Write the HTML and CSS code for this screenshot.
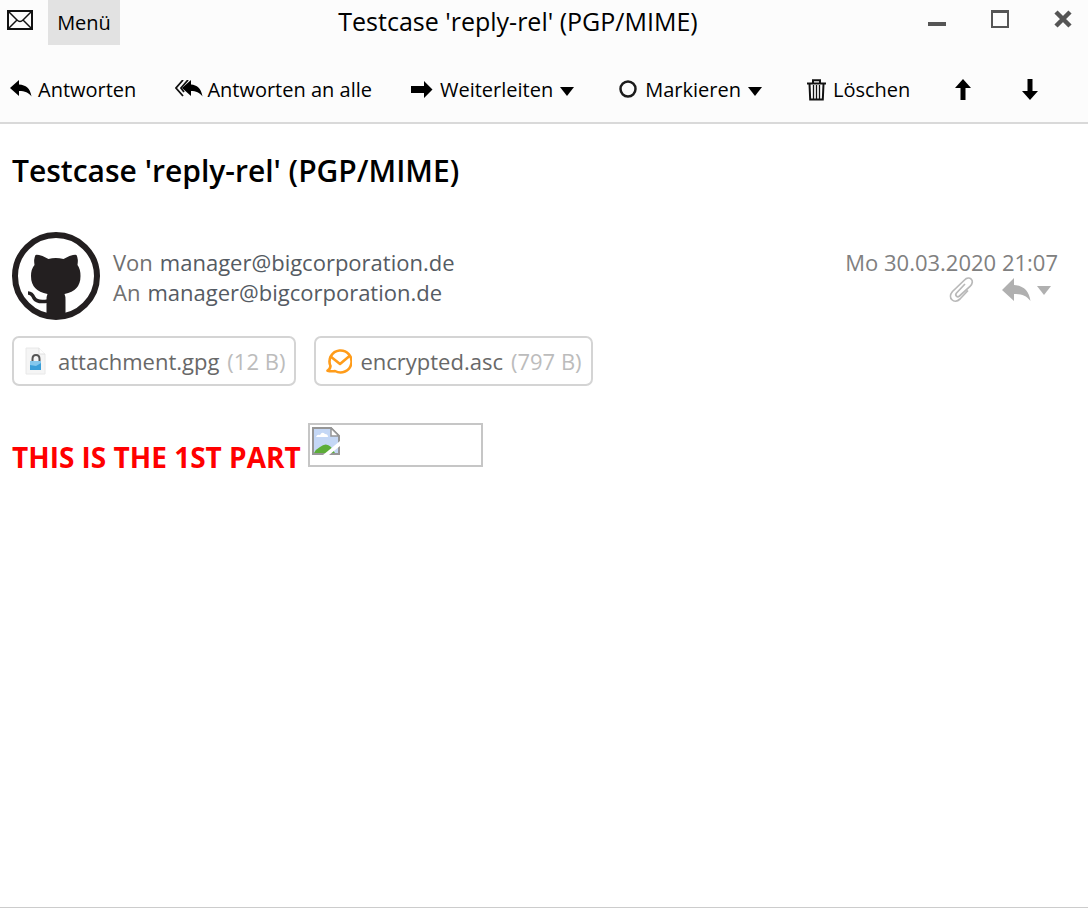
FILE: index.html
```html
<!DOCTYPE html>
<html lang="de">
<head>
<meta charset="utf-8">
<meta name="viewport" content="width=device-width, initial-scale=1">
<title>Testcase 'reply-rel' (PGP/MIME)</title>
<link rel="stylesheet" href="styles.css">
</head>
<body>
<div class="window">
  <header class="chrome">
    <div class="titlebar">
      <div class="titlebar-left">
        <svg class="mail-icon" width="26" height="20" viewBox="0 0 26 20" fill="none" stroke="#111"><rect x="1" y="1" width="24" height="18" stroke-width="2"/><path d="M2 2l8 8q3 3 6 0l8-8M2 18l8-8M24 18l-8-8" stroke-width="1.5"/></svg>
        <button class="menu-button" type="button">Menü</button>
      </div>
      <div class="window-title">Testcase 'reply-rel' (PGP/MIME)</div>
      <div class="window-controls">
        <button type="button" aria-label="Minimieren"><svg width="20" height="20" viewBox="0 0 20 20"><path d="M1 13h18v4H1z" fill="#555"/></svg></button>
        <button type="button" aria-label="Maximieren"><svg width="20" height="20" viewBox="0 0 20 20"><path d="M1 1h18v18H1zM3 4v13h14V4z" fill="#555" fill-rule="evenodd"/></svg></button>
        <button type="button" aria-label="Schließen"><svg width="20" height="20" viewBox="0 0 20 20"><path d="M3 3l14 14M17 3L3 17" stroke="#555" stroke-width="4.5"/></svg></button>
      </div>
    </div>
    <nav class="toolbar" aria-label="Nachricht">
      <button class="tool reply" type="button"><svg width="22" height="20" viewBox="0 0 22 20"><path d="M0 8L9 0v4.500C16 5 20 8 21.500 16.500C18.500 12.500 15 11 9 11v5z"/></svg>Antworten</button>
      <button class="tool reply-all" type="button"><svg width="28" height="20" viewBox="0 0 28 20"><path d="M8 0L1 8l7 8M13 0L6 8l3 4" fill="none" stroke="#111" stroke-width="1.800"/><path d="M7 8l9-8v4.500C22 5 26 8 27.500 16.500C24.500 12.500 21 11 16 11v5z"/></svg>Antworten an alle</button>
      <button class="tool forward" type="button"><svg width="22" height="20" viewBox="0 0 22 20"><path d="M0 6h13V1l8.500 8.500L13 18v-5H0z"/></svg>Weiterleiten<svg class="caret" width="14" height="9" viewBox="0 0 14 9"><path d="M0 0h14L7 9z"/></svg></button>
      <button class="tool mark" type="button"><svg width="19" height="20" viewBox="0 0 19 20"><circle cx="9" cy="9" r="7.500" fill="none" stroke="#1b1b1b" stroke-width="2.500"/></svg>Markieren<svg class="caret" width="14" height="9" viewBox="0 0 14 9"><path d="M0 0h14L7 9z"/></svg></button>
      <button class="tool delete" type="button"><svg width="19" height="22" viewBox="0 0 19 22" fill="none" stroke="#111"><path d="M0 4.500h19M6 4V1.200h7V4" stroke-width="2"/><path d="M2.500 5l.7 15.500h12.600L16.500 5" stroke-width="2"/><path d="M6.500 6v14M9.500 6v14M12.500 6v14" stroke-width="1.300"/></svg>Löschen</button>
      <button class="tool previous" type="button" aria-label="Vorherige"><svg width="16" height="22" viewBox="0 0 16 22"><path d="M8 0l8 9h-5.500v12h-5V9H0z"/></svg></button>
      <button class="tool next" type="button" aria-label="Nächste"><svg width="16" height="22" viewBox="0 0 16 22"><path d="M8 21l8-9h-5.500V0h-5v12H0z"/></svg></button>
    </nav>
  </header>
  <main class="message">
    <h1>Testcase 'reply-rel' (PGP/MIME)</h1>
    <section class="sender">
      <svg class="avatar" width="88" height="88" viewBox="0 0 88 88" role="img" aria-label="Profilbild"><circle cx="44" cy="44" r="41" fill="#fff" stroke="#231f20" stroke-width="6"/><path fill="#231f20" d="M23.500 23q1-1 7 1l6 3q7-2 15 0l6-3q6-2 7-1q2 4 1 10q3 4 3 11q0 15-16 18q1 2 1 6v17q-10 3-19 0V68q0-4 1-6Q19 59 19 44q0-7 3.500-11q-1-6 1-10z"/><path d="M16 61q4 0 6 5q3 5 14 3" fill="none" stroke="#231f20" stroke-width="3.500"/></svg>
      <dl class="addresses">
        <div><dt>Von</dt><dd>manager@bigcorporation.de</dd></div>
        <div><dt>An</dt><dd>manager@bigcorporation.de</dd></div>
      </dl>
      <div class="meta">
        <time datetime="2020-03-30T21:07">Mo 30.03.2020 21:07</time>
        <div class="meta-actions">
          <svg width="26" height="26" viewBox="0 0 26 26" fill="none" stroke="#b9b9b9" stroke-width="1.700"><path d="M17 7l-8.500 9c-2 2.500.8 5 3 3L22 9.500c6-6.500-1-11-5.500-6.500L4.500 14.500C-1 21 6 27.500 12 22l8-8.500"/></svg>
          <button class="reply-menu" type="button" aria-label="Antworten"><svg width="29" height="24" viewBox="0 0 29 24"><path d="M0 12L12 0v7c10 .5 15 6 16.500 16C24 17.500 20 16 12 16v7z"/></svg><svg width="14" height="9" viewBox="0 0 14 9"><path d="M0 0h14L7 9z"/></svg></button>
        </div>
      </div>
    </section>
    <section class="attachments" aria-label="Anhänge">
      <button class="attachment" type="button"><svg width="26" height="28" viewBox="-1 0 26 28"><path d="M1 1h13l6 6v20H1z" fill="#f5f5f5" stroke="#e8e8e8"/><path d="M14 1v6h6" fill="#fff" stroke="#e0e0e0"/><path d="M7.500 15v-3q0-4 3.500-4t3.500 4v3" fill="none" stroke="#555" stroke-width="2"/><path d="M5 14h11v9H5z" fill="#3a9fd8"/><path d="M5 14h11v2l-5 3-6-1z" fill="#83c8ed"/></svg><span class="filename">attachment.gpg</span><span class="filesize">(12 B)</span></button>
      <button class="attachment" type="button"><svg width="26" height="26" viewBox="0 0 26 26" fill="none" stroke="#ff9c1a" stroke-width="2.600" stroke-linejoin="round"><path d="M4.500 18A11 11 0 1 1 9 23q-4 .7-7.500-.3Q4 21.500 4.500 18z"/><path d="M4 8l10 8 9.500-8"/></svg><span class="filename">encrypted.asc</span><span class="filesize">(797 B)</span></button>
    </section>
    <div class="mail-body">
      <strong>THIS IS THE 1ST PART</strong>
      <span class="missing-image" role="img" aria-label="Bild nicht verfügbar"><svg width="28" height="28" viewBox="0 0 28 28"><path d="M1 1h18l8 8v18H1z" fill="#c4d7f5"/><path d="M4 10q1-3 4-2 2-4 5-1 3 0 3 3z" fill="#fff"/><path d="M2 26q2-4 6-6 6-5 11 0l4 6z" fill="#5cad38"/><path d="M1 1h18l8 8v18H1z" fill="none" stroke="#969696" stroke-width="2"/><path d="M19 1v8h8z" fill="#fff" stroke="#969696" stroke-width="1.500"/><path d="M11 28L28 14v5L17 28z" fill="#fff"/></svg></span>
    </div>
  </main>
</div>
</body>
</html>
```
FILE: styles.css
```css
* { box-sizing: border-box; }
body {
  margin: 0;
  background: #fff;
  color: #000;
  font-family: "Open Sans", "Noto Sans", sans-serif;
  font-size: 20px;
}
button {
  margin: 0;
  padding: 0;
  border: 0;
  background: none;
  color: inherit;
  font: inherit;
  white-space: nowrap;
}
svg { display: block; flex: none; }
.window {
  display: flex;
  flex-direction: column;
  min-height: 100vh;
  border-bottom: 1px solid #ccc;
}
.chrome {
  background: #fcfcfc;
  border-bottom: 2px solid #d9d9d9;
}
.titlebar {
  display: grid;
  grid-template-columns: 1fr auto 1fr;
  height: 45px;
  padding: 0 15px 0 7px;
}
.titlebar-left { display: flex; gap: 15px; }
.mail-icon { margin-top: 10px; }
.menu-button {
  width: 72px;
  background: #e2e2e2;
}
.window-title {
  padding-right: 44px;
  font-size: 25px;
  line-height: 42px;
}
.window-controls {
  display: flex;
  justify-content: flex-end;
  align-items: center;
  gap: 43px;
  padding-bottom: 7px;
}
.toolbar {
  display: flex;
  align-items: center;
  gap: 39px;
  height: 77px;
  padding: 12px 10px 0;
}
.tool {
  display: flex;
  align-items: center;
  gap: 7px;
}
.tool.reply { gap: 6px; }
.tool.reply-all { gap: 4px; }
.tool.mark,
.tool.delete,
.tool.previous { margin-left: 6px; }
.tool.next { margin-left: 12px; }
.caret { margin-top: 3px; }
.message { padding: 24px 30px 24px 12px; background: #fff; }
h1 {
  margin: 0 0 38px;
  font-size: 30px;
  font-weight: 600;
  line-height: 46px;
}
.sender {
  display: flex;
  gap: 13px;
  color: #707070;
  font-size: 22px;
  line-height: 30px;
}
.addresses { margin: 15px 0 0; }
.addresses div { display: flex; gap: 7px; }
.addresses dd { margin: 0; color: #555b63; }
.meta { margin: 15px 0 0 auto; }
.meta time { display: block; color: #808080; }
.meta-actions {
  display: flex;
  justify-content: flex-end;
  gap: 28px;
  padding-right: 7px;
}
.reply-menu {
  display: flex;
  align-items: center;
  gap: 6px;
  height: 26px;
  fill: #b0b0b0;
}
.attachments { display: flex; gap: 18px; margin-top: 16px; }
.attachment {
  display: flex;
  align-items: center;
  height: 50px;
  padding: 0 9px 0 10px;
  border: 2px solid #d4d4d4;
  border-radius: 7px;
  font-size: 22px;
}
.filename { margin: 0 8px; color: #686868; }
.filesize { color: #bcbcbc; }
.mail-body {
  display: flex;
  align-items: flex-end;
  gap: 7px;
  margin-top: 37px;
  color: #f00;
  font-size: 28px;
  line-height: 20px;
}
.missing-image {
  width: 175px;
  height: 44px;
  padding: 2px;
  border: 2px solid #c6c6c6;
}
```
